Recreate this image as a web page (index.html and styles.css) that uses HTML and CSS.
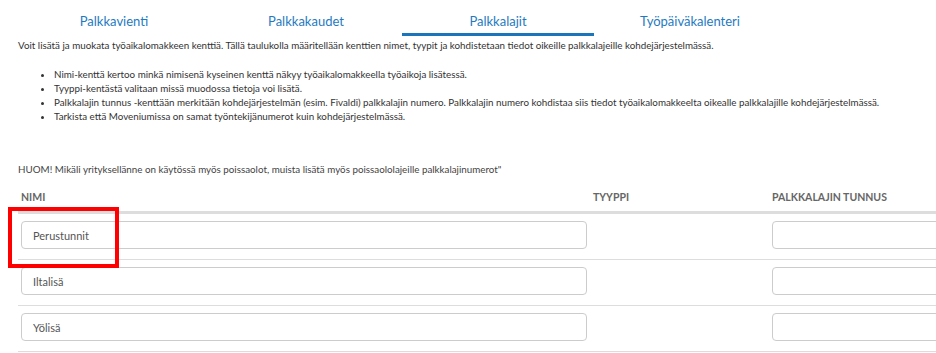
FILE: index.html
```html
<!DOCTYPE html>
<html lang="fi">
<head>
    <meta charset="UTF-8">
    <meta name="viewport" content="width=device-width, initial-scale=1.0">
    <title>Palkkalajit</title>
    <link rel="stylesheet" href="styles.css">
</head>
<body>
    <div class="page">
        <nav class="tabs">
            <a class="tab">Palkkavienti</a>
            <a class="tab">Palkkakaudet</a>
            <a class="tab active">Palkkalajit</a>
            <a class="tab">Työpäiväkalenteri</a>
        </nav>

        <p class="intro">Voit lisätä ja muokata työaikalomakkeen kenttiä. Tällä taulukolla määritellään kenttien nimet, tyypit ja kohdistetaan tiedot oikeille palkkalajeille kohdejärjestelmässä.</p>

        <ul class="help">
            <li>Nimi-kenttä kertoo minkä nimisenä kyseinen kenttä näkyy työaikalomakkeella työaikoja lisätessä.</li>
            <li>Tyyppi-kentästä valitaan missä muodossa tietoja voi lisätä.</li>
            <li>Palkkalajin tunnus -kenttään merkitään kohdejärjestelmän (esim. Fivaldi) palkkalajin numero. Palkkalajin numero kohdistaa siis tiedot työaikalomakkeelta oikealle palkkalajille kohdejärjestelmässä.</li>
            <li>Tarkista että Moveniumissa on samat työntekijänumerot kuin kohdejärjestelmässä.</li>
        </ul>

        <p class="note">HUOM! Mikäli yrityksellänne on käytössä myös poissaolot, muista lisätä myös poissaololajeille palkkalajinumerot"</p>

        <div class="table-wrap">
            <table class="fields">
                <thead>
                    <tr>
                        <th class="col-name">NIMI</th>
                        <th class="col-type">TYYPPI</th>
                        <th class="col-code">PALKKALAJIN TUNNUS</th>
                    </tr>
                </thead>
                <tbody>
                    <tr>
                        <td><input type="text" value="Perustunnit"></td>
                        <td></td>
                        <td><input type="text"></td>
                    </tr>
                    <tr>
                        <td><input type="text" value="Iltalisä"></td>
                        <td></td>
                        <td><input type="text"></td>
                    </tr>
                    <tr>
                        <td><input type="text" value="Yölisä"></td>
                        <td></td>
                        <td><input type="text"></td>
                    </tr>
                </tbody>
            </table>
            <div class="highlight"></div>
        </div>
    </div>
</body>
</html>
```

FILE: styles.css
```css
html, body {
    margin: 0;
    padding: 0;
    overflow: hidden;
    background-color: white;
}
body {
    font-family: Lato, 'Open Sans', sans-serif;
    color: #333;
}
.page {
    padding-left: 18px;
    width: 1200px;
}
.tabs {
    display: flex;
    height: 36px;
}
.tab {
    width: 192px;
    box-sizing: border-box;
    text-align: center;
    font-size: 13px;
    color: #1f7ac1;
    padding-top: 13px;
    line-height: 17px;
}
.tab.active {
    border-bottom: 3px solid #1b75bb;
}
.intro {
    font-size: 9.8px;
    line-height: 14px;
    margin: 2px 0 0;
}
.help {
    font-size: 9.8px;
    line-height: 14px;
    margin: 15px 0 0;
    padding-left: 36px;
}
.note {
    font-size: 9.8px;
    line-height: 14px;
    margin: 39px 0 0;
    color: #444;
}
.table-wrap {
    position: relative;
    margin-top: 14px;
}
.fields {
    border-collapse: collapse;
    width: 1180px;
}
th {
    text-align: left;
    font-size: 10.5px;
    font-weight: bold;
    color: #666;
    padding: 0 3px 7px;
    line-height: 14px;
    border-bottom: 3px solid #ddd;
}
.col-name {
    width: 566px;
}
.col-type {
    width: 173px;
}
td {
    padding: 7px 3px 10px;
    border-bottom: 1px solid #ddd;
}
td input {
    display: block;
    width: 100%;
    height: 28px;
    box-sizing: border-box;
    border: 1px solid #ccc;
    border-radius: 4px;
    padding: 0 11px;
    font-family: Lato, 'Open Sans', sans-serif;
    font-size: 11px;
    color: #555;
}
.highlight {
    position: absolute;
    left: -10px;
    top: 17px;
    width: 111px;
    height: 61px;
    box-sizing: border-box;
    border: 4px solid #f00;
}
```
